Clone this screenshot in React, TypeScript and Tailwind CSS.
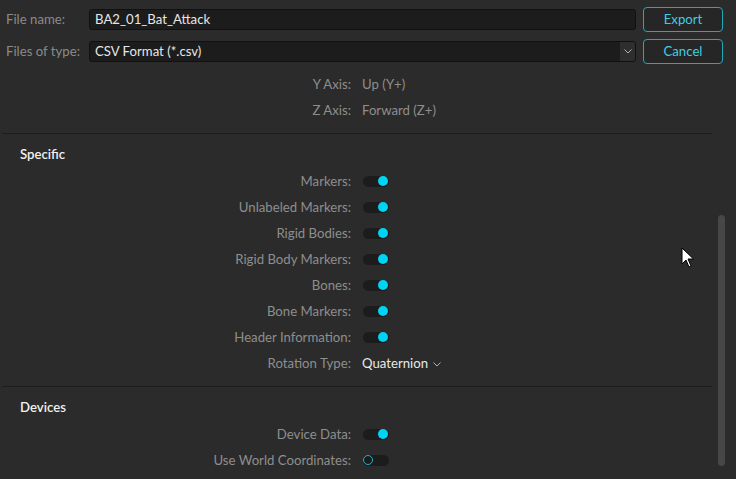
import React from "react";

function Toggle({ on }: { on: boolean }) {
  return (
    <div className="relative ml-[1px] w-[26px] h-[11px] rounded-full bg-[#1c1c1c]">
      {on ? (
        <div className="absolute right-[1px] top-1/2 -translate-y-1/2 w-[10px] h-[10px] rounded-full bg-[#00d4f5]" />
      ) : (
        <div className="absolute left-0 top-1/2 -translate-y-1/2 w-[10px] h-[10px] rounded-full border-[1.5px] border-[#1fb5c8] bg-[#1c1c1c]" />
      )}
    </div>
  );
}

function Row({ label, children }: { label: string; children: React.ReactNode }) {
  return (
    <div className="flex items-center h-[26px]">
      <div className="w-[351px] text-right text-[#8e8e8e]">{label}</div>
      <div className="ml-[11px] flex items-center">{children}</div>
    </div>
  );
}

export default function App() {
  const specific = [
    "Markers:",
    "Unlabeled Markers:",
    "Rigid Bodies:",
    "Rigid Body Markers:",
    "Bones:",
    "Bone Markers:",
    "Header Information:",
  ];
  return (
    <div
      className="relative w-[736px] h-[479px] bg-[#2b2b2b] overflow-hidden text-[13.2px] leading-none"
      style={{ fontFamily: "Lato, 'Open Sans', sans-serif" }}
    >
      {/* top form */}
      <div className="flex pt-[7px] pl-[6px] pr-[13px]">
        <div className="flex-1 flex flex-col gap-[11px] pt-[2px]">
          <div className="flex items-center">
            <div className="w-[83px] text-[#8a8a8a]">File name:</div>
            <div className="flex-1 h-[21px] bg-[#1c1c1c] border border-[#111] rounded-[3px] flex items-center pl-[5px] pt-[1px] text-[#e6e6e6]">
              BA2_01_Bat_Attack
            </div>
          </div>
          <div className="flex items-center">
            <div className="w-[83px] text-[#8a8a8a]">Files of type:</div>
            <div className="flex-1 h-[21px] bg-[#1c1c1c] border border-[#111] rounded-[3px] flex items-center pl-[5px] text-[#e6e6e6] relative">
              <span className="flex-1 pt-[1px]">CSV Format (*.csv)</span>
              <div className="w-[15px] h-[19px] bg-[#2e2e2e] flex items-center justify-center rounded-r-[2px]">
                <svg width="8" height="5" viewBox="0 0 8 5">
                  <path d="M0.5 0.5 L4 4 L7.5 0.5" stroke="#b0b0b0" strokeWidth="1" fill="none" />
                </svg>
              </div>
            </div>
          </div>
        </div>
        <div className="ml-[7px] flex flex-col gap-[7px] w-[80px]">
          <button className="h-[25px] border border-[#20a9ba] rounded-[4px] text-[#40cde0] bg-[#262626] text-[13.2px]">
            Export
          </button>
          <button className="h-[25px] border border-[#20a9ba] rounded-[4px] text-[#40cde0] bg-[#262626] text-[13.2px]">
            Cancel
          </button>
        </div>
      </div>

      {/* axis rows */}
      <div className="mt-[8px]">
        <Row label="Y Axis:">
          <span className="text-[#8e8e8e]">Up (Y+)</span>
        </Row>
        <Row label="Z Axis:">
          <span className="text-[#8e8e8e]">Forward (Z+)</span>
        </Row>
      </div>

      <div className="mt-[9px] ml-[2px] w-[710px] h-px bg-[#1e1e1e]" />

      <div className="pl-[20px] pt-[14px] pb-[7px] text-[#f0f0f0] font-semibold">Specific</div>
      <div>
        {specific.map((l) => (
          <Row key={l} label={l}>
            <Toggle on />
          </Row>
        ))}
        <Row label="Rotation Type:">
          <span className="text-[#e8e8e8] flex items-center gap-[5px]">
            Quaternion
            <svg width="8" height="5" viewBox="0 0 8 5" className="mt-[2px]">
              <path d="M0.5 0.5 L4 4 L7.5 0.5" stroke="#b0b0b0" strokeWidth="1" fill="none" />
            </svg>
          </span>
        </Row>
      </div>

      <div className="mt-[10px] ml-[2px] w-[710px] h-px bg-[#1e1e1e]" />

      <div className="pl-[20px] pt-[14px] pb-[7px] text-[#f0f0f0] font-semibold">Devices</div>
      <div>
        <Row label="Device Data:">
          <Toggle on />
        </Row>
        <Row label="Use World Coordinates:">
          <Toggle on={false} />
        </Row>
      </div>

      {/* scrollbar */}
      <div className="absolute left-[718px] top-[215px] w-[7px] h-[251px] rounded-full bg-[#474747]" />

      {/* cursor */}
      <svg className="absolute left-[681px] top-[247px]" width="16" height="24" viewBox="0 0 16 24">
        <path
          d="M1 1 L1 17 L5 13 L8 20 L10 19 L7 12 L12.5 12 Z"
          fill="#fff"
          stroke="#000"
          strokeWidth="1"
        />
      </svg>
    </div>
  );
}
